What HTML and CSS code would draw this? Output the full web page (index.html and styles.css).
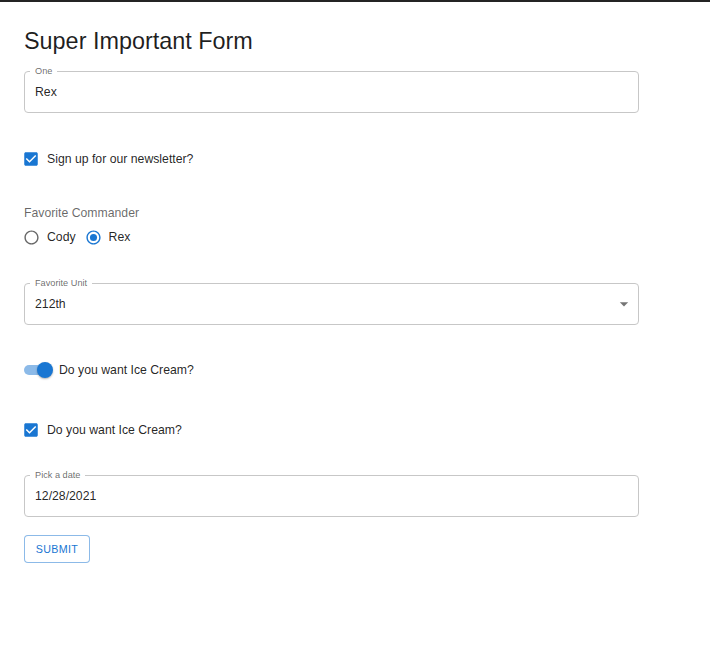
FILE: index.html
```html
<!DOCTYPE html>
<html lang="en">
<head>
<meta charset="utf-8">
<title>Super Important Form</title>
<link rel="stylesheet" href="styles.css">
</head>
<body>
<form class="form">
  <h1 class="title">Super Important Form</h1>

  <fieldset class="field field-first">
    <legend>One</legend>
    <div class="value">Rex</div>
  </fieldset>

  <label class="row row-news">
    <svg class="cb" viewBox="0 0 24 24"><path fill="#1976d2" d="M19 3H5c-1.11 0-2 .9-2 2v14c0 1.1.89 2 2 2h14c1.110 0 2-.9 2-2V5c0-1.1-.89-2-2-2zm-9 14l-5-5 1.41-1.41L10 14.170l7.59-7.59L19 8l-9 9z"/></svg>
    <span>Sign up for our newsletter?</span>
  </label>

  <div class="group-label">Favorite Commander</div>
  <div class="row radio-row">
    <label class="radio">
      <svg class="rd" viewBox="0 0 24 24"><path fill="rgba(0,0,0,0.6)" d="M12 2C6.48 2 2 6.48 2 12s4.48 10 10 10 10-4.48 10-10S17.52 2 12 2zm0 18c-4.42 0-8-3.58-8-8s3.58-8 8-8 8 3.58 8 8-3.58 8-8 8z"/></svg>
      <span>Cody</span>
    </label>
    <label class="radio">
      <svg class="rd" viewBox="0 0 24 24"><path fill="#1976d2" d="M12 2C6.48 2 2 6.48 2 12s4.48 10 10 10 10-4.48 10-10S17.52 2 12 2zm0 18c-4.42 0-8-3.58-8-8s3.58-8 8-8 8 3.58 8 8-3.58 8-8 8z"/><circle cx="12" cy="12" r="5" fill="#1976d2"/></svg>
      <span>Rex</span>
    </label>
  </div>

  <fieldset class="field field-mid">
    <legend>Favorite Unit</legend>
    <div class="value select">
      <span>212th</span>
      <svg class="arrow" viewBox="0 0 24 24"><path fill="rgba(0,0,0,0.54)" d="M7 10l5 5 5-5z"/></svg>
    </div>
  </fieldset>

  <label class="row row-switch">
    <span class="switch"><span class="track"></span><span class="thumb"></span></span>
    <span>Do you want Ice Cream?</span>
  </label>

  <label class="row row-ice">
    <svg class="cb" viewBox="0 0 24 24"><path fill="#1976d2" d="M19 3H5c-1.11 0-2 .9-2 2v14c0 1.1.89 2 2 2h14c1.11 0 2-.9 2-2V5c0-1.1-.89-2-2-2zm-9 14l-5-5 1.41-1.41L10 14.17l7.59-7.59L19 8l-9 9z"/></svg>
    <span>Do you want Ice Cream?</span>
  </label>

  <fieldset class="field field-date">
    <legend>Pick a date</legend>
    <div class="value">12/28/2021</div>
  </fieldset>

  <div class="actions">
    <button type="button" class="btn">Submit</button>
  </div>
</form>
</body>
</html>
```

FILE: styles.css
```css
html, body {
  background: #fff;
}
body {
  margin: 0;
  border-top: 2px solid #242424;
  font-family: "Liberation Sans", Arial, Helvetica, sans-serif;
  color: rgba(0, 0, 0, 0.87);
}
.form {
  display: flex;
  flex-direction: column;
  align-items: flex-start;
  width: 615px;
  padding-left: 24px;
}
.title {
  margin: 25px 0 0;
  font-size: 23.4px;
  font-weight: 400;
  line-height: 28px;
  color: rgba(0, 0, 0, 0.88);
}
.field {
  box-sizing: border-box;
  width: 615px;
  min-width: 0;
  margin: 0;
  padding: 0 4px 0 10px;
  border: 1px solid #c7c7c7;
  border-radius: 4px;
}
.field-first { margin-top: 11px; }
.field-mid { margin-top: 29px; }
.field-date { margin-top: 28px; }
.field legend {
  margin-left: -5px;
  padding: 0 5px;
  font-size: 9.2px;
  line-height: 10px;
  color: rgba(0, 0, 0, 0.6);
}
.value {
  box-sizing: border-box;
  height: 36px;
  padding-bottom: 4px;
  display: flex;
  align-items: center;
  font-size: 12.25px;
}
.select {
  justify-content: space-between;
}
.arrow {
  width: 20px;
  height: 20px;
}
.row {
  display: flex;
  align-items: center;
  height: 24px;
  font-size: 12.25px;
}
.row-news { margin-top: 34px; }
.row-switch { margin-top: 33px; }
.row-ice { margin-top: 36px; }
.cb {
  width: 18px;
  height: 18px;
  margin-left: -2px;
  margin-right: 7px;
}
.group-label {
  margin-top: 34px;
  font-size: 12.25px;
  line-height: 16px;
  color: rgba(0, 0, 0, 0.6);
}
.radio-row {
  margin-top: 4px;
  gap: 10px;
}
.radio {
  display: flex;
  align-items: center;
}
.rd {
  width: 17px;
  height: 17px;
  margin-left: -1px;
  margin-right: 7px;
}
.switch {
  position: relative;
  width: 29px;
  height: 15px;
  margin-right: 6px;
  display: flex;
  align-items: center;
}
.track {
  width: 27px;
  height: 10px;
  border-radius: 5px;
  background: #8cbae8;
}
.thumb {
  position: absolute;
  left: 13px;
  top: -0.5px;
  width: 16px;
  height: 16px;
  border-radius: 50%;
  background: #1976d2;
  box-shadow: 0 1px 2px rgba(0, 0, 0, 0.3);
}
.actions {
  margin-top: 18px;
}
.btn {
  box-sizing: border-box;
  height: 28px;
  width: 66px;
  padding: 0;
  border: 1px solid rgba(25, 118, 210, 0.5);
  border-radius: 4px;
  background: #fff;
  color: #1976d2;
  font-family: "Liberation Sans", Arial, Helvetica, sans-serif;
  font-size: 10.7px;
  font-weight: 500;
  letter-spacing: 0.35px;
  text-transform: uppercase;
}
```
